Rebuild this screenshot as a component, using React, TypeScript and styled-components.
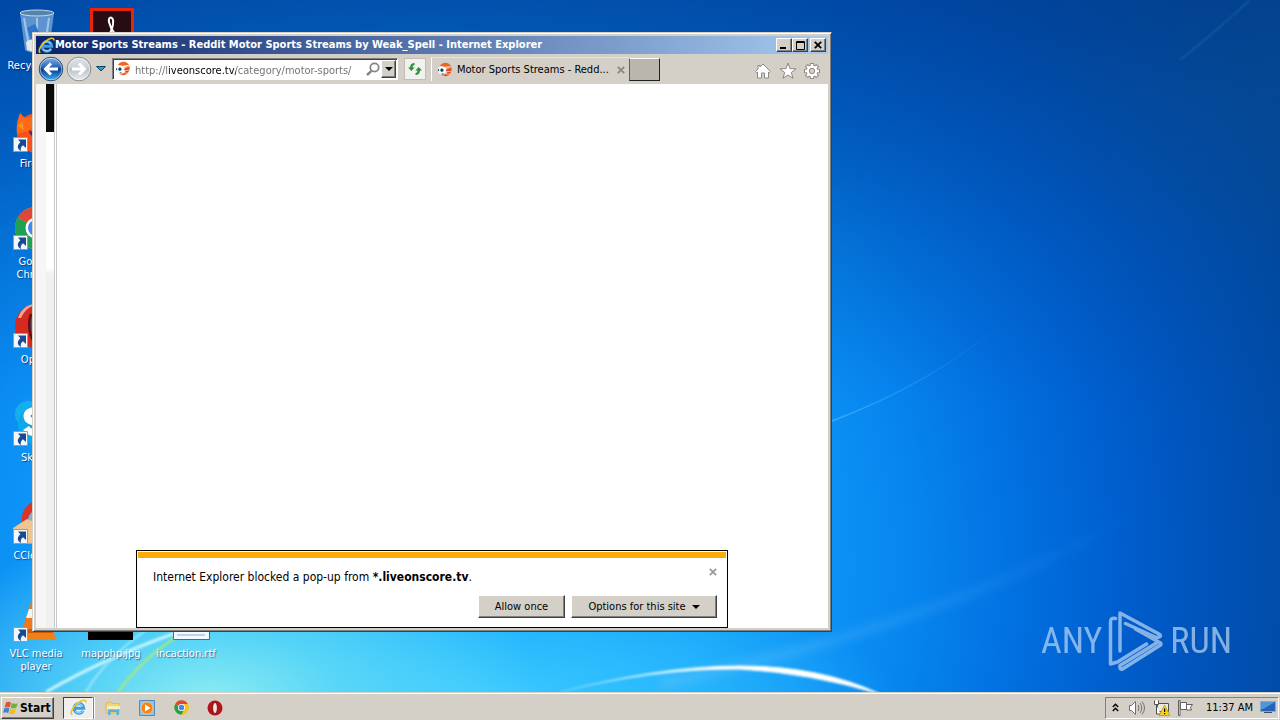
import React from "react";
import styled, { createGlobalStyle, css } from "styled-components";

const uiFont = '"DejaVu Sans Condensed", "DejaVu Sans", sans-serif';

const Global = createGlobalStyle`
  * { box-sizing: border-box; }
  body { margin: 0; font: 11px/13px ${uiFont}; color: #000; }
  button, input { font: inherit; color: inherit; margin: 0; padding: 0; }
  svg { display: block; flex: none; }
`;

const raised = css`
  border: 1px solid;
  border-color: #fff #404040 #404040 #fff;
  box-shadow: inset -1px -1px 0 #808080;
`;

const sunken = css`
  border: 1px solid;
  border-color: #808080 #fff #fff #808080;
`;

const Screen = styled.div`
  display: flex;
  flex-direction: column;
  min-height: 100vh;
`;

const Desktop = styled.main`
  position: relative;
  flex: 1;
  overflow: hidden;
  background:
    radial-gradient(ellipse 330px 170px at 210px 700px, #8cecf2 0%, #62dcf6cc 40%, #2fb8fa00 100%),
    radial-gradient(ellipse 420px 120px at 480px 700px, #3ccaff 0%, #2fb8fa00 100%),
    radial-gradient(ellipse 260px 200px at 100% 60px, #1c5a8466 0%, #1c5a8400 100%),
    radial-gradient(circle at 420px 560px, #16aefc 0, #14a4fa 280px, #0d94f6 400px, #0684ee 500px, #0270e0 600px, #0060d0 690px, #0054bc 780px, #004ca8 870px, #004494 960px, #00408c 1100px);
`;

const Shade = styled.div`
  position: absolute;
  inset: 0;
  background: linear-gradient(180deg, #003e90aa 0, #00459a88 110px, #004a9e44 240px, #004a9e00 400px);
`;

const Wallpaper = styled.svg`
  position: absolute;
  inset: 0;
  width: 100%;
  height: 100%;
`;

const IconGrid = styled.div`
  position: relative;
  display: grid;
  grid-template-columns: repeat(3, 72px);
  grid-template-rows: repeat(7, 98px);
  column-gap: 3px;
  padding-top: 8px;
  height: 684px;
`;

const Shortcut = styled.div<{ $col: number; $row: number }>`
  grid-column: ${(p) => p.$col};
  grid-row: ${(p) => p.$row};
  display: flex;
  flex-direction: column;
  align-items: center;
  gap: 3px;
  color: #fff;
  text-align: center;
  text-shadow: 1px 1px 1px #0048;
`;

const Brand = styled.div`
  position: absolute;
  right: 48px;
  bottom: 19px;
  display: flex;
  align-items: center;
  gap: 6px;
  color: #bcd8f5;
  opacity: 0.7;
  font: 36px/64px "Roboto Condensed", Roboto, sans-serif;
`;

const Window = styled.section`
  position: absolute;
  top: 32px;
  left: 32px;
  bottom: 60px;
  width: 62.5%;
  min-width: 720px;
  display: flex;
  flex-direction: column;
  padding: 2px;
  background: #d4d0c8;
  border: 1px solid;
  border-color: #d4d0c8 #404040 #404040 #d4d0c8;
  box-shadow: inset 1px 1px 0 #fff, inset -1px -1px 0 #808080;
`;

const WindowInner = styled.div`
  flex: 1;
  display: flex;
  flex-direction: column;
  padding: 1px;
`;

const TitleBar = styled.header`
  display: flex;
  align-items: center;
  height: 18px;
  padding: 0 2px;
  background: linear-gradient(90deg, #0a246a, #a6caf0);
  color: #fff;
`;

const Title = styled.h1`
  flex: 1;
  margin: 0;
  font: bold 11px/16px ${uiFont};
  white-space: nowrap;
`;

const Caption = styled.button<{ $apart?: boolean }>`
  ${raised}
  display: flex;
  align-items: center;
  justify-content: center;
  width: 16px;
  height: 14px;
  margin-left: ${(p) => (p.$apart ? 2 : 0)}px;
  background: #d4d0c8;
`;

const Toolbar = styled.nav`
  display: flex;
  align-items: center;
  height: 30px;
  padding: 0 4px 0 2px;
`;

const Plain = styled.button<{ $width: number }>`
  display: flex;
  align-items: center;
  justify-content: center;
  width: ${(p) => p.$width}px;
  height: 26px;
  border: 0;
  background: none;
`;

const Address = styled.form`
  ${sunken}
  display: flex;
  align-items: center;
  gap: 4px;
  width: 286px;
  height: 22px;
  margin-left: 5px;
  padding: 1px 1px 1px 2px;
  background: #fff;
  box-shadow: inset 1px 1px 0 #404040;
`;

const Url = styled.input`
  flex: 1;
  min-width: 0;
  height: 18px;
  padding-top: 2px;
  border: 0;
  outline: 0;
  line-height: 16px;
  color: #6d6d6d;
  background: linear-gradient(90deg, #6d6d6d 33px, #000 33px, #000 101px, #6d6d6d 101px);
  -webkit-background-clip: text;
  background-clip: text;
  -webkit-text-fill-color: transparent;
`;

const AddressTools = styled.div`
  display: flex;
  align-items: center;
`;

const DropButton = styled.button`
  ${raised}
  display: flex;
  align-items: center;
  justify-content: center;
  width: 15px;
  height: 18px;
  background: #d4d0c8;
`;

const Refresh = styled.button`
  display: flex;
  align-items: center;
  justify-content: center;
  width: 22px;
  height: 22px;
  margin: 0 5px 0 6px;
  border: 1px solid #c2beb6;
  background: #f2f1ee;
`;

const Tab = styled.div`
  display: flex;
  align-items: center;
  gap: 4px;
  width: 198px;
  height: 24px;
  padding: 0 1px 0 5px;
  border-left: 1px solid #fff;
  border-top: 1px solid #e6e3dd;
  line-height: 16px;
`;

const TabName = styled.span`
  flex: 1;
  white-space: nowrap;
`;

const NewTab = styled.button`
  width: 31px;
  height: 23px;
  background: #bab6ae;
  border: 1px solid;
  border-color: #fff #202020 #202020 #606060;
`;

const Tools = styled.div`
  display: flex;
  margin-left: auto;
  padding-top: 4px;
`;

const Page = styled.div`
  flex: 1;
  display: flex;
  background: #fff;
`;

const Rail = styled.div`
  display: flex;
  width: 21px;
  margin-right: -21px;
  border-right: 1px solid #c8c8c8;
  background: linear-gradient(90deg, #f6f6f6 0 10px, #fff 10px);
`;

const RailInner = styled.div`
  width: 9px;
  margin-left: 10px;
  border-right: 1px solid #c8c8c8;
  background: linear-gradient(180deg, #0a0a0a 48px, #fff 48px, #fff 184px, #f0f0f0 190px);
`;

const View = styled.div`
  flex: 1;
  display: flex;
  flex-direction: column;
  justify-content: flex-end;
  align-items: center;
`;

const Notice = styled.div`
  width: calc(75% - 2px);
  min-width: 480px;
  padding: 1px 1px 9px;
  border: 1px solid #000;
  background: #fff;
`;

const Stripe = styled.div`
  height: 6px;
  background: #faac0a;
`;

const NoticeRow = styled.div`
  display: flex;
  justify-content: space-between;
  padding: 1px 4px 0 15px;
`;

const Message = styled.p`
  margin: 9px 0 0;
  font-size: 12px;
  line-height: 18px;
`;

const Actions = styled.div`
  display: flex;
  justify-content: flex-end;
  gap: 6px;
  padding: 9px 9px 0 0;
`;

const Action = styled.button<{ $width: number }>`
  ${raised}
  display: flex;
  align-items: center;
  justify-content: center;
  gap: 6px;
  width: ${(p) => p.$width}px;
  height: 23px;
  background: #d4d0c8;
  line-height: 16px;
`;

const Taskbar = styled.footer`
  display: flex;
  align-items: center;
  height: 28px;
  padding: 2px 1px 0;
  background: #d4d0c8;
  border-top: 1px solid #d4d0c8;
  box-shadow: inset 0 1px 0 #fff;
`;

const Start = styled.button`
  ${raised}
  display: flex;
  align-items: center;
  gap: 1px;
  width: 53px;
  height: 22px;
  padding-left: 1px;
  background: #d4d0c8;
  font: bold 12px/16px ${uiFont};
`;

const ActiveTask = styled.button`
  display: flex;
  align-items: center;
  justify-content: center;
  width: 30px;
  height: 22px;
  margin: 0 3px 0 9px;
  border: 1px solid;
  border-color: #404040 #fff #fff #404040;
  background: #f0efec;
  box-shadow: 1px 0 0 #808080, 2px 0 0 #fff;
`;

const Tray = styled.div`
  ${sunken}
  display: flex;
  align-items: center;
  height: 22px;
  margin-left: auto;
  padding: 0 2px;
`;

const Clock = styled.time`
  margin: 0 7px 0 6px;
  line-height: 16px;
`;

const IeMark = ({ size }: { size: number }) => (
  <svg width={size} height={size} viewBox="0 0 16 16" fill="none">
    <path d="M12.4 11.1A4.6 4.6 0 1 1 13 8.7H4.3" stroke="#3c9ce8" strokeWidth="2.7" />
    <path d="M12.2 11A4.4 4.4 0 0 1 5 11.4M4.6 7.2a4 4 0 0 1 7.4-.4" stroke="#9cdcfc" strokeWidth="1" />
    <path d="M2.2 14.8C-.5 13.5 2.6 7.6 7 4.1c4-3.3 8.2-4.3 8-.8" stroke="#f2c21c" strokeWidth="1.5" />
  </svg>
);

const Ball = () => (
  <svg width="16" height="16" viewBox="0 0 16 16">
    <path d="M3 3.5A6.5 6.5 0 0 1 14 4l-5 .4-3.400 1.400z" fill="#f0641e" />
    <path d="M14.200 4.600c1.400 4.400-1 9.300-5.600 9.600l-4-1.200 4.200-.8c2.200-.6 1.600-3.200 0-3.600l1.800-2z" fill="#e8451c" />
    <path d="M9 6.400l5.400-.8M9.600 9.600l5-.4M8.800 12l3.800-.2" stroke="#ffb47c" />
    <circle cx="5" cy="8.200" r="4" fill="#fafafa" />
    <path d="M4 6.400l2.200.3.4 2.200-1.900 1-1.600-1.500zM1.200 7l1 .4-.2 2-1-.6zM4 12l2-.8.8.6-1.500.8z" fill="#17405e" />
  </svg>
);

const Orb = ({ forward }: { forward?: boolean }) => (
  <svg width="26" height="26" viewBox="0 0 26 26">
    <defs>
      <linearGradient id={forward ? "orbF" : "orbB"} x1="0" y1="0" x2="0" y2="1">
        <stop offset="0" stopColor={forward ? "#e0e4e6" : "#8ab4e4"} />
        <stop offset=".42" stopColor={forward ? "#ccd2d6" : "#2864b8"} />
        <stop offset=".52" stopColor={forward ? "#bcc4ca" : "#0c3c94"} />
        <stop offset="1" stopColor={forward ? "#e8f0f4" : "#3cb4f4"} />
      </linearGradient>
    </defs>
    <circle cx="13" cy="13" r="11.800" fill={`url(#${forward ? "orbF" : "orbB"})`} stroke={forward ? "#84888c" : "#2c4c7c"} />
    <circle cx="13" cy="13" r="10.800" fill="none" stroke="#fff" strokeOpacity=".5" />
    <path
      d={forward ? "M6 13h12M13 7.500l5.500 5.500-5.500 5.500" : "M20 13H8M13 7.500L7.500 13l5.500 5.500"}
      fill="none"
      stroke="#fff"
      strokeWidth="3"
    />
  </svg>
);

const Cross = ({ color, size }: { color: string; size: number }) => (
  <svg width={size} height={size} viewBox="0 0 8 8">
    <path d="M.8.8l6.400 6.400M7.200.8L.8 7.200" stroke={color} strokeWidth="1.800" />
  </svg>
);

const Triangle = () => (
  <svg width="8" height="4" viewBox="0 0 8 4">
    <path d="M0 0h8L4 4z" />
  </svg>
);

const ChromeArt = () => (
  <>
    <circle cx="24" cy="24" r="21" fill="#fbc116" />
    <path d="M24 24L5.800 13.500A21 21 0 0 1 42.200 13.500z" fill="#e0453a" />
    <path d="M24 24L5.800 13.500A21 21 0 0 0 24 45l9-16z" fill="#1fa052" />
    <path d="M24 13.500h18.200A21 21 0 0 1 24 45l9-16z" fill="#fbc116" />
    <circle cx="24" cy="24" r="10.500" fill="#fff" />
    <circle cx="24" cy="24" r="8" fill="#4286f0" />
  </>
);

const OperaArt = () => (
  <>
    <ellipse cx="24" cy="24" rx="21" ry="22" fill="#d42a20" />
    <path d="M6 16C10 4 20 1 27 2 16 4 12 10 9 16z" fill="#f0a498" />
    <ellipse cx="26" cy="24" rx="8" ry="18" fill="#1c6cb8" />
    <path d="M19 12c-3 8-2 20 2 26" stroke="#6a0c0c" strokeWidth="2.500" fill="none" />
  </>
);

const Arrow = () => (
  <g>
    <path d="M1.500 31.500h14v14h-14z" fill="#f4f6fa" stroke="#8c9cb4" />
    <path d="M6 33.500h8V42l-3-2.800c-2.200 1.600-2.700 3-2 5.800-3.700-2-4.500-5.500-.6-8.700z" fill="#164a94" />
  </g>
);

const art: Record<string, React.ReactNode> = {
  bin: (
    <>
      <path d="M8 5l5 37c4 4 20 4 24 0l5-37z" fill="#7cacdc" fillOpacity=".75" />
      <path d="M12 10l5 28M25 10v32M37 10l-4 28" stroke="#cfe6f8" strokeOpacity=".6" strokeWidth="2" />
      <path d="M15 20l8-4 4 8-8 8z" fill="#2c74cc" />
      <path d="M14 34q5-5 11 0t11 0l-1 8q-10 4-20 0z" fill="#e4e8ea" />
      <ellipse cx="25" cy="5" rx="17" ry="3" fill="#5484ac" stroke="#c4d8e8" />
    </>
  ),
  firefox: (
    <>
      <circle cx="25" cy="27" r="20" fill="#f8501c" />
      <path d="M5 28C4 18 6 13 8 7l5 5 8-1c6 3 4 8 4 8l-9 6z" fill="#ff6a1a" />
      <path d="M6 20l4-5 2 9z" fill="#ff9020" />
      <path d="M17 24q3 3 8 1l-3 5q-5 0-5-6z" fill="#5a2860" />
      <circle cx="29" cy="27" r="8" fill="#5a38b8" />
    </>
  ),
  chrome: <ChromeArt />,
  opera: <OperaArt />,
  skype: (
    <>
      <rect x="3" y="1" width="26" height="26" rx="13" fill="#14b0ec" />
      <circle cx="26" cy="25" r="20" fill="#0ca8ec" />
      <path d="M34 14c-6-5-19-5-19 2 0 9 18 5 18 13 0 6-14 6-19-1" stroke="#fff" strokeWidth="7" fill="none" />
    </>
  ),
  ccleaner: (
    <>
      <path d="M40 6C24-4 8 8 10 24c2 16 20 20 30 10z" fill="#d83428" />
      <path d="M36 12c-10-4-20 2-20 10s10 14 20 8z" fill="#7cb4d4" />
      <path d="M1 30l14-9 14 6 6 18-30 1z" fill="#f0c490" />
    </>
  ),
  vlc: (
    <>
      <path d="M20 3h8l10 32H10z" fill="#f07818" />
      <path d="M17 13h14l3 9H14z" fill="#f4f4f4" />
      <path d="M8 33h32l5 11H3z" fill="#f08018" />
      <path d="M8 33h32l1 4H7z" fill="#c85c0c" />
    </>
  ),
  acrobat: (
    <>
      <path d="M4.500 1.500h41v46h-41z" fill="#280c14" stroke="#e8240c" strokeWidth="3" />
      <path d="M15 35c8-6 12-17 11-23-1-4-5-3-4 2 2 9 8 15 14 17-8-2-15 1-21 4z" fill="none" stroke="#fff" strokeWidth="2" />
    </>
  ),
  image: <path d="M1 8h45v36H1z" fill="#000" />,
  doc: (
    <>
      <path d="M11.500 4.500h36v39h-36z" fill="#f4f8ff" stroke="#4c64b0" />
      <path d="M15 12h28M15 18h28M15 24h28M15 32h28M15 39h28" stroke="#8ca8dc" />
    </>
  ),
};

const items = [
  { art: "bin", name: "Recycle Bin", col: 1, row: 1 },
  { art: "acrobat", name: "", col: 2, row: 1 },
  { art: "firefox", name: "Firefox", col: 1, row: 2, link: true },
  { art: "chrome", name: "Google Chrome", col: 1, row: 3, link: true },
  { art: "opera", name: "Opera", col: 1, row: 4, link: true },
  { art: "skype", name: "Skype", col: 1, row: 5, link: true },
  { art: "ccleaner", name: "CCleaner", col: 1, row: 6, link: true },
  { art: "vlc", name: "VLC media player", col: 1, row: 7, link: true },
  { art: "image", name: "mapphp.jpg", col: 2, row: 7 },
  { art: "doc", name: "incaction.rtf", col: 3, row: 7 },
];

const Scenery = () => (
  <Wallpaper viewBox="0 0 1280 692" preserveAspectRatio="none" fill="none">
    <defs>
      <filter id="soft"><feGaussianBlur stdDeviation="1.200" /></filter>
      <filter id="haze" x="-20%" y="-50%" width="140%" height="200%"><feGaussianBlur stdDeviation="5" /></filter>
      <linearGradient id="fade"><stop stopColor="#5cc0fc" stopOpacity=".6" /><stop offset="1" stopColor="#3c9cf4" stopOpacity="0" /></linearGradient>
      <linearGradient id="arc"><stop stopColor="#9ce4ff" stopOpacity=".3" /><stop offset=".5" stopColor="#fff" /><stop offset="1" stopColor="#fff" /></linearGradient>
    </defs>
    <path d="M832 421Q930 384 1000 325" stroke="url(#fade)" strokeWidth="1.500" />
    <path d="M660 684Q960 620 1140 510" stroke="url(#fade)" strokeWidth="9" filter="url(#haze)" />
    <path d="M1180 60Q1215 32 1250 0" stroke="#4c94cc" strokeOpacity=".3" strokeWidth="1.500" filter="url(#soft)" />
    <path d="M560 692Q660 666 740 666Q820 666 880 694Q810 673 740 669Q660 668 560 692Z" fill="url(#arc)" stroke="url(#arc)" filter="url(#soft)" />
    <path d="M46 692Q110 655 190 628" stroke="#c8f4ff" strokeWidth="3" filter="url(#soft)" />
    <path d="M86 692Q106 658 146 630" stroke="#9ce8fc" strokeWidth="2" filter="url(#soft)" />
    <path d="M118 692Q145 656 178 636" stroke="#a4e880" strokeWidth="2.500" filter="url(#soft)" />
  </Wallpaper>
);

export default function App() {
  return (
    <Screen>
      <Global />
      <Desktop>
        <Shade />
        <Scenery />
        <IconGrid>
          {items.map((it) => (
            <Shortcut key={it.art} $col={it.col} $row={it.row}>
              <svg width="48" height="48" viewBox="0 0 48 48">
                {art[it.art]}
                {it.link && <Arrow />}
              </svg>
              {it.name}
            </Shortcut>
          ))}
        </IconGrid>

        <Brand>
          <span>ANY</span>
          <svg width="56" height="62" viewBox="0 0 55 62" fill="none" stroke="currentColor" strokeWidth="3.500" strokeLinejoin="round" strokeLinecap="round">
            <path d="M7 8.500Q2 7 2 12v42l7-2 29-18M11.500 41V3l39 21q3 2 0 3t-5-.500L17 13.500M11.500 23v-20M27 19l25 14q1 1 0 2L14 59q-3 1-2.500-3.500L48 33" />
          </svg>
          <span>RUN</span>
        </Brand>

        <Window>
          <WindowInner>
            <TitleBar>
              <IeMark size={17} />
              <Title>Motor Sports Streams - Reddit Motor Sports Streams by Weak_Spell - Internet Explorer</Title>
              <Caption aria-label="Minimize">
                <svg width="8" height="8"><path d="M0 6h6v2H0z" /></svg>
              </Caption>
              <Caption aria-label="Maximize">
                <svg width="9" height="9" fill="none" stroke="#000"><path d="M.5.5h8v8h-8zM0 1.500h9" /></svg>
              </Caption>
              <Caption aria-label="Close" $apart>
                <Cross color="#000" size={8} />
              </Caption>
            </TitleBar>

            <Toolbar>
              <Plain $width={26} aria-label="Back"><Orb /></Plain>
              <Plain $width={30} aria-label="Forward"><Orb forward /></Plain>
              <Plain $width={13} aria-label="Recent pages">
                <svg width="10" height="6"><path d="M.5.5h9L5 5z" fill="#2c9cd4" stroke="#124468" /></svg>
              </Plain>
              <Address onSubmit={(e) => e.preventDefault()}>
                <Ball />
                <Url aria-label="Address" defaultValue="http://liveonscore.tv/category/motor-sports/" />
                <AddressTools>
                  <Plain type="button" $width={16} aria-label="Search">
                    <svg width="14" height="14" fill="none" stroke="#848484">
                      <circle cx="8.500" cy="5.500" r="4.200" strokeWidth="1.800" />
                      <path d="M5.500 8.800L1 13" strokeWidth="2.400" />
                    </svg>
                  </Plain>
                  <DropButton type="button" aria-label="Show address list"><Triangle /></DropButton>
                </AddressTools>
              </Address>
              <Refresh aria-label="Refresh">
                <svg width="16" height="16" viewBox="0 0 16 16" fill="#2c9438">
                  <path d="M1 6.500h2C3 3.500 5 2 7.500 2v2C6 4 5.600 5 5.600 6.500h2L4.300 10z" />
                  <path d="M15 9.500h-2c0 3-2 4.500-4.500 4.500v-2c1.500 0 1.900-1 1.900-2.500h-2L11.700 6z" />
                </svg>
              </Refresh>
              <Tab>
                <Ball />
                <TabName>Motor Sports Streams - Redd...</TabName>
                <Plain $width={14} aria-label="Close tab"><Cross color="#8c8882" size={8} /></Plain>
              </Tab>
              <NewTab aria-label="New tab" />
              <Tools>
                <Plain $width={24} aria-label="Home">
                  <svg width="18" height="18" viewBox="0 0 18 18" fill="#fff" stroke="#8c8882">
                    <path d="M9 2l7.500 7.500-1 1L14.500 10v6h-4v-5h-3v5h-4v-6l-1 .5-1-1L4 7V3.500h2V5z" />
                  </svg>
                </Plain>
                <Plain $width={25} aria-label="Favorites">
                  <svg width="18" height="18" viewBox="0 0 18 18" fill="#fff" stroke="#8c8882">
                    <path d="M9 1l2 5.600 6 .2-4.700 3.700L14 16.300 9 13l-5 3.300 1.700-5.800L1 6.800l6-.2z" />
                  </svg>
                </Plain>
                <Plain $width={24} aria-label="Tools">
                  <svg width="18" height="18" viewBox="0 0 18 18">
                    <g stroke="#8c8882" strokeWidth="4.200"><path d="M9 1v16M1 9h16M3.300 3.300l11.400 11.400M14.700 3.300L3.300 14.700" /></g>
                    <circle cx="9" cy="9" r="6.300" fill="#8c8882" />
                    <g stroke="#fff" strokeWidth="2.400"><path d="M9 2v14M2 9h14M4 4l10 10M14 4L4 14" /></g>
                    <circle cx="9" cy="9" r="5.400" fill="#fff" />
                    <circle cx="9" cy="9" r="2.700" fill="#d4d0c8" stroke="#8c8882" />
                  </svg>
                </Plain>
              </Tools>
            </Toolbar>

            <Page>
              <Rail><RailInner /></Rail>
              <View>
                <Notice role="alert">
                  <Stripe />
                  <NoticeRow>
                    <Message>Internet Explorer blocked a pop-up from <b>*.liveonscore.tv</b>.</Message>
                    <Plain $width={18} aria-label="Dismiss"><Cross color="#9a9a9a" size={8} /></Plain>
                  </NoticeRow>
                  <Actions>
                    <Action $width={87}>Allow once</Action>
                    <Action $width={146}>Options for this site <Triangle /></Action>
                  </Actions>
                </Notice>
              </View>
            </Page>
          </WindowInner>
        </Window>
      </Desktop>

      <Taskbar>
        <Start>
          <svg width="16" height="16" viewBox="0 0 16 16">
            <path d="M3 2.500q3-1.500 5 .2L6.800 7.500Q4.500 6 1.600 7.200z" fill="#e8502c" />
            <path d="M8.800 3q3 1.400 6 .2l-1.500 4.600q-3 1.300-5.700-.1z" fill="#6cb43c" />
            <path d="M1.400 8.200q3-1.400 5 .2l-1.200 4.800Q3 11.700 0 12.800z" fill="#3c84d8" />
            <path d="M7.300 8.700q3 1.300 5.700.1l-1.400 4.800q-3 1.200-5.600-.1z" fill="#f4bc24" />
          </svg>
          Start
        </Start>
        <ActiveTask aria-label="Internet Explorer"><IeMark size={17} /></ActiveTask>
        <Plain $width={34} aria-label="File Explorer">
          <svg width="16" height="16" viewBox="0 0 16 16">
            <path d="M1 3l5-1 1 1.500h7V13H1z" fill="#f0d678" stroke="#d0ac4c" strokeWidth=".6" />
            <path d="M2 6h13v3H2z" fill="#fbeeb4" />
            <path d="M3 15V9.500h11V15h-2.500v-3h-6v3z" fill="#5cb0e0" />
          </svg>
        </Plain>
        <Plain $width={34} aria-label="Media Player">
          <svg width="16" height="16" viewBox="0 0 16 16">
            <path d="M.500.500h15v15H.500z" fill="#8cc4ec" stroke="#4c8cc0" />
            <circle cx="8" cy="8" r="6" fill="#f48414" stroke="#fcd8a4" strokeWidth=".6" />
            <path d="M6 4.500l5.500 3.500L6 11.500z" fill="#fff" />
          </svg>
        </Plain>
        <Plain $width={34} aria-label="Chrome">
          <svg width="15" height="15" viewBox="2 2 44 44"><ChromeArt /></svg>
        </Plain>
        <Plain $width={34} aria-label="Opera">
          <svg width="16" height="16" viewBox="0 0 16 16">
            <circle cx="8" cy="8" r="7.500" fill="#b41418" />
            <ellipse cx="8" cy="8" rx="2.400" ry="5.600" fill="#f4e4e4" stroke="#6c0808" strokeWidth=".8" />
          </svg>
        </Plain>
        <Tray>
          <Plain $width={14} aria-label="Show hidden icons">
            <svg width="7" height="9" fill="none" stroke="#000" strokeWidth="1.400"><path d="M.8 4l2.700-2.700L6.200 4M.8 8l2.700-2.700L6.200 8" /></svg>
          </Plain>
          <Plain $width={30} aria-label="Volume">
            <svg width="18" height="16" viewBox="0 0 18 16" fill="#fff" stroke="#707070">
              <path d="M1.500 5.500h2l4-4v13l-4-4h-2z" />
              <path d="M10 5q2 3 0 6M12 3q3.500 5 0 10M14 1.500q5 6.500 0 13" fill="none" />
            </svg>
          </Plain>
          <Plain $width={18} aria-label="Network">
            <svg width="17" height="16" viewBox="0 0 17 16">
              <path d="M4.500 3.500h11v8h-11z" fill="#e8e8e4" stroke="#505050" />
              <path d="M1.500.500v4h4v-4M3.500 5v9h4" fill="#fff" stroke="#505050" />
              <path d="M11.500 5L17 15.500H6z" fill="#f8d020" stroke="#a88408" strokeWidth=".6" />
              <path d="M11 8.500h1.200v3.500H11zM11 13h1.200v1.200H11z" />
            </svg>
          </Plain>
          <Plain $width={30} aria-label="Action Center">
            <svg width="17" height="16" viewBox="0 0 17 16" fill="#fff" stroke="#606060">
              <path d="M1.500.500h1.500v15H1.500zM3.500 2.500h6v7h-6zM9.500 4.500h6l-2 3 1 2.500h-5z" />
            </svg>
          </Plain>
          <Clock>11:37 AM</Clock>
          <Plain $width={16} aria-label="Show desktop">
            <svg width="16" height="13" viewBox="0 0 16 13">
              <path d="M.500.500h15v10H.500z" fill="#2464b8" stroke="#88a8cc" />
              <path d="M1 1h14L3 8H1z" fill="#5494dc" />
              <path d="M4 11.500h8" stroke="#404c60" />
            </svg>
          </Plain>
        </Tray>
      </Taskbar>
    </Screen>
  );
}
